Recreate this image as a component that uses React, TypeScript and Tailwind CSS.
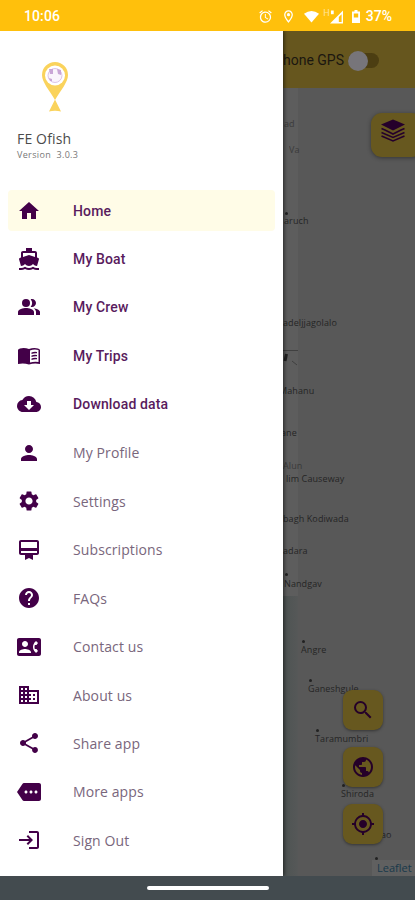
import React from 'react';
import {
  MdHome, MdDirectionsBoatFilled, MdPeopleAlt, MdCloudDownload, MdPerson, MdSettings,
  MdCardMembership, MdHelp, MdContactPhone, MdBusiness, MdShare, MdMore, MdLogin, MdSearch,
  MdPublic, MdMyLocation, MdAlarm, MdOutlineLocationOn,
} from 'react-icons/md';
import { clsx } from 'clsx';

type Icon = React.ComponentType<{ className?: string }>;

interface MenuItem {
  label: string;
  icon: Icon;
  strong?: boolean;
  active?: boolean;
}

const TripsIcon: Icon = ({ className }) => (
  <svg viewBox="0 0 24 24" className={className} fill="currentColor">
    <path d="M3 4.500Q7.500 3.500 12 5Q16.500 3.500 21 4.500Q23 5 23 6V20Q17 19 12 20.500Q7 19 1 20V6Q1 5 3 4.500ZM13 6.500V18.500Q17 17.500 21.500 18V6Q17 5 13 6.500Z" fillRule="evenodd" />
    <path d="M14.500 8.500Q17 7.500 20 8V9.300Q17 9 14.500 9.900ZM14.500 11.500Q17 10.500 20 11V12.300Q17 12 14.500 12.900ZM14.500 14.500Q17 13.500 20 14V15.300Q17 15 14.500 15.900Z" />
  </svg>
);

const menuItems: MenuItem[] = [
  { label: 'Home', icon: MdHome, strong: true, active: true },
  { label: 'My Boat', icon: MdDirectionsBoatFilled, strong: true },
  { label: 'My Crew', icon: MdPeopleAlt, strong: true },
  { label: 'My Trips', icon: TripsIcon, strong: true },
  { label: 'Download data', icon: MdCloudDownload, strong: true },
  { label: 'My Profile', icon: MdPerson },
  { label: 'Settings', icon: MdSettings },
  { label: 'Subscriptions', icon: MdCardMembership },
  { label: 'FAQs', icon: MdHelp },
  { label: 'Contact us', icon: MdContactPhone },
  { label: 'About us', icon: MdBusiness },
  { label: 'Share app', icon: MdShare },
  { label: 'More apps', icon: MdMore },
  { label: 'Sign Out', icon: MdLogin },
];

interface Place {
  name: string;
  x: number;
  y: number;
  dot?: [number, number];
  faint?: boolean;
}

// Pins on the map canvas, in map pixels
const places: Place[] = [
  { name: 'ad', x: 284, y: 117, faint: true },
  { name: 'Va', x: 289, y: 143, faint: true },
  { name: 'aruch', x: 284, y: 214, dot: [285, 212] },
  { name: 'adeljjagolalo', x: 283, y: 316 },
  { name: 'Mahanu', x: 279, y: 384 },
  { name: 'ane', x: 281, y: 426 },
  { name: 'Alun', x: 283, y: 459, faint: true },
  { name: 'lim Causeway', x: 286, y: 472 },
  { name: 'bagh Kodiwada', x: 283, y: 512 },
  { name: 'adara', x: 283, y: 544 },
  { name: 'Nandgav', x: 284, y: 577, dot: [285, 573] },
  { name: 'Angre', x: 301, y: 643, dot: [302, 640] },
  { name: 'Ganeshgule', x: 308, y: 682, dot: [309, 679] },
  { name: 'Taramumbri', x: 315, y: 732, dot: [316, 729] },
  { name: 'Shiroda', x: 341, y: 787, dot: [342, 784] },
  { name: 'ao', x: 381, y: 828, dot: [375, 857] },
];

const StatusBar: React.FC = () => (
  <header className="h-[31px] shrink-0 bg-[#ffc00c] flex items-center justify-between pl-6 pr-[23px] pt-0.5 text-white text-[14px] font-medium">
    <span className="tracking-[0.1px]">10:06</span>
    <div className="flex items-center">
      <MdAlarm className="size-[15px]" />
      <MdOutlineLocationOn className="size-[15px] ml-2" />
      <svg viewBox="0 0 16 13" className="w-[15px] h-[13px] ml-2" fill="currentColor">
        <path d="M0 3.500Q8-2.500 16 3.500L8 13Z" />
      </svg>
      <span className="text-[9px] leading-3 ml-1 self-start mt-px text-white/60 font-normal">H</span>
      <svg viewBox="0 0 14 14" className="w-[13px] h-[14px]" fill="currentColor">
        <path d="M14 0V14H0ZM12.500 4L9.500 7V12.500H12.500Z" fillRule="evenodd" />
        <path d="M1 0H4V4H1Z" />
      </svg>
      <svg viewBox="0 0 8 13" className="w-2 h-[13px] ml-[9px]" fill="currentColor">
        <path d="M2.500 0H5.500V1.500H8V13H0V1.500H2.500ZM1.800 3.500V7.500H6.200V3.500Z" fillRule="evenodd" />
      </svg>
      <span className="ml-1.5">37%</span>
    </div>
  </header>
);

const Logo: React.FC = () => (
  <svg viewBox="0 0 26 50" className="w-[26px] h-[50px] ml-[25px]">
    <path d="M13 0A13 13 0 0 0 0 13C0 20 7 28 13 38C19 28 26 20 26 13A13 13 0 0 0 13 0Z" fill="#fad35c" />
    <path d="M13 37.500L7 49.500Q13 48 19 49.500Z" fill="#fad35c" />
    <circle cx="13" cy="13.500" r="10" fill="#fff" />
    <circle cx="13" cy="13.500" r="7" fill="#faf4fc" stroke="#dcc4e7" strokeWidth="1" />
    <path d="M7 7h4v5H8zM15 7l4 1v5l-3-1zM7 16l3 1v2H8z" fill="#c9a5d6" />
  </svg>
);

const Drawer: React.FC = () => (
  <aside className="relative w-[283px] h-full bg-white shadow-[1px_0_4px_rgba(0,0,0,0.6)] pt-[31px]">
    <div className="pl-[17px] h-[128px]">
      <Logo />
      <h1 className="mt-[18px] text-[14px] leading-[18px] tracking-[0.15px] text-[#4b4b4b] font-['Open_Sans',sans-serif]">FE Ofish</h1>
      <p className="mt-px text-[9px] leading-3 tracking-[0.35px] text-[#777] font-['Open_Sans',sans-serif]">Version&nbsp; 3.0.3</p>
    </div>
    <nav className="px-2">
      {menuItems.map(({ label, icon: ItemIcon, strong, active }) => (
        <div
          key={label}
          className={clsx('h-[41px] mb-[7.460px] pl-[9px] flex items-center gap-8 rounded-sm', active && 'bg-[#fffce7]')}
        >
          <ItemIcon className="size-6 text-[#430048]" />
          <span
            className={clsx(
              'text-[14px]',
              strong
                ? "font-['Roboto',sans-serif] font-medium tracking-[0.15px] text-[#591b5d] pt-px"
                : "font-['Open_Sans',sans-serif] tracking-[0.1px] text-[#79667c]"
            )}
          >
            {label}
          </span>
        </div>
      ))}
    </nav>
  </aside>
);

const mapButtons: Icon[] = [MdSearch, MdPublic, MdMyLocation];

const MapScreen: React.FC = () => (
  <div className="absolute inset-0 flex flex-col bg-[#585858] overflow-hidden">
    <div className="h-[57px] shrink-0 bg-[#66561e] flex items-center pl-[271px] pt-0.5 text-[14px] text-[#1b1710]">
      <span className="w-[73px] flex justify-end whitespace-nowrap">Phone GPS</span>
      <span className="ml-1 w-[31px] h-[15px] rounded-full bg-[#4c3e12] flex items-center">
        <span className="size-5 shrink-0 rounded-full bg-[#77757a]" />
      </span>
    </div>
    <div className="flex-1 w-[298px] flex flex-col">
      <div className="h-[508px] bg-[#5d5d5d]" />
      <div className="flex-1 bg-linear-to-r from-[#4d5352] from-95% to-[#565858]" />
    </div>
  </div>
);

const MapOverlay: React.FC = () => (
  <div className="absolute -top-[31px] inset-x-0 h-[876px] text-[#252525] font-['Open_Sans',sans-serif] text-[9px] leading-[14px] overflow-hidden">
    {/* road fragments beside the drawer */}
    <svg viewBox="0 0 16 60" className="absolute left-[283px] top-[340px] w-4 h-[60px]" fill="none" stroke="#404040">
      <path d="M0 10.500H15M9 21L14 25" />
      <path d="M3.500 14L2 21" stroke="#222" strokeWidth="3" />
    </svg>
    {places.map((place) => (
      <React.Fragment key={place.name}>
        <span
          className={clsx('absolute whitespace-nowrap tracking-[0.1px]', place.faint && 'opacity-60')}
          style={{ left: place.x, top: place.y }}
        >
          {place.name}
        </span>
        {place.dot && (
          <span className="absolute size-[3px] rounded-full bg-[#222]" style={{ left: place.dot[0], top: place.dot[1] }} />
        )}
      </React.Fragment>
    ))}
    <div className="absolute left-[371px] top-[113px] w-[52px] h-[44px] rounded-[11px] bg-[#67581f] shadow-[0_1px_4px_rgba(0,0,0,0.4)] pl-[10px] pt-[6px]">
      <svg viewBox="0 0 24 24" className="size-6" fill="#25002b">
        <path d="M12 .5L24 5.500L12 11.500L0 5.500Z" />
        <path d="M.5 9.500L4 11L12 15L20 11L23.500 9.500M.5 13.500L12 18.500L23.500 13.500M.5 17L12 22L23.500 17" fill="none" stroke="#25002b" strokeWidth="1.600" />
      </svg>
    </div>
    <div className="absolute left-[343px] top-[690px] flex flex-col gap-[17px]">
      {mapButtons.map((ButtonIcon, i) => (
        <div key={i} className="size-10 rounded-[9px] bg-[#67581f] shadow-[0_1px_3px_rgba(0,0,0,0.4)] flex items-center justify-center">
          <ButtonIcon className="size-6 text-[#250029]" />
        </div>
      ))}
    </div>
    <div className="absolute right-0 bottom-0 h-[16px] w-[43px] pl-[5px] bg-[#606060] text-[11px] leading-4 text-[#18394b]">
      Leaflet
    </div>
  </div>
);

export default function App() {
  return (
    <div className="w-[415px] h-[900px] flex flex-col overflow-hidden font-['Roboto',sans-serif]">
      <StatusBar />
      <main className="relative h-[845px] shrink-0 overflow-hidden">
        <MapScreen />
        <MapOverlay />
        <Drawer />
      </main>
      <footer className="flex-1 bg-[#434b4f] flex items-center justify-center">
        <div className="w-[122px] h-1 rounded-full bg-white" />
      </footer>
    </div>
  );
}
